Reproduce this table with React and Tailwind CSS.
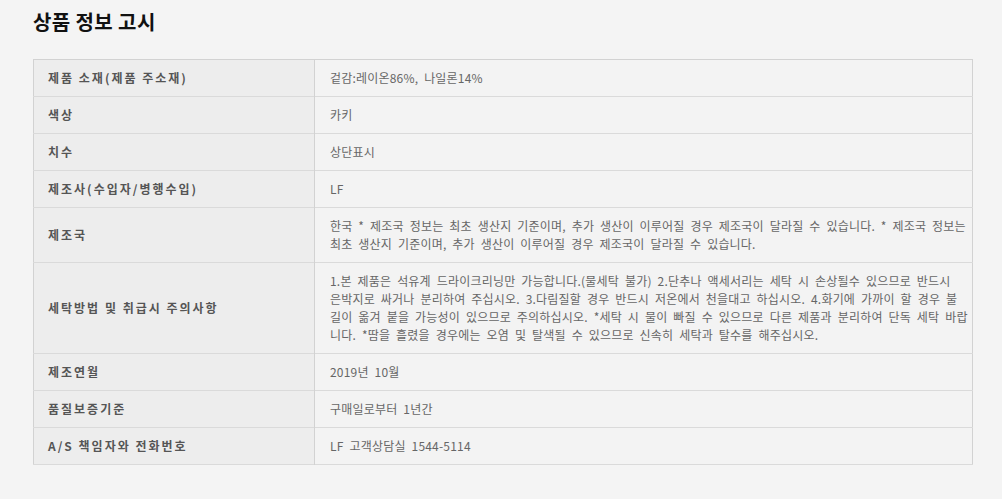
import React from "react";

const rows = [
  { label: "제품 소재(제품 주소재)", value: ["겉감:레이온86%, 나일론14%"] },
  { label: "색상", value: ["카키"] },
  { label: "치수", value: ["상단표시"] },
  { label: "제조사(수입자/병행수입)", value: ["LF"] },
  {
    label: "제조국",
    value: [
      "한국 * 제조국 정보는 최초 생산지 기준이며, 추가 생산이 이루어질 경우 제조국이 달라질 수 있습니다. * 제조국 정보는",
      "최초 생산지 기준이며, 추가 생산이 이루어질 경우 제조국이 달라질 수 있습니다.",
    ],
  },
  {
    label: "세탁방법 및 취급시 주의사항",
    value: [
      "1.본 제품은 석유계 드라이크리닝만 가능합니다.(물세탁 불가) 2.단추나 액세서리는 세탁 시 손상될수 있으므로 반드시",
      "은박지로 싸거나 분리하여 주십시오. 3.다림질할 경우 반드시 저온에서 천을대고 하십시오. 4.화기에 가까이 할 경우 불",
      "길이 옮겨 붙을 가능성이 있으므로 주의하십시오. *세탁 시 물이 빠질 수 있으므로 다른 제품과 분리하여 단독 세탁 바랍",
      "니다. *땀을 흘렸을 경우에는 오염 및 탈색될 수 있으므로 신속히 세탁과 탈수를 해주십시오.",
    ],
  },
  { label: "제조연월", value: ["2019년 10월"] },
  { label: "품질보증기준", value: ["구매일로부터 1년간"] },
  { label: "A/S 책임자와 전화번호", value: ["LF 고객상담실 1544-5114"] },
];

function App() {
  return (
    <div
      className="w-[1002px] h-[499px] bg-[#f4f4f4] pl-[33px] pt-[9px] overflow-hidden"
      style={{ fontFamily: '"Noto Sans CJK KR", "Noto Sans", sans-serif' }}
    >
      <h2 className="text-[20px] leading-[26px] font-bold text-[#111] tracking-[0.4px]">상품 정보 고시</h2>

      {/* 고시 테이블 */}
      <table className="mt-[24px] w-[940px] border-collapse border border-[#d2d2d2] text-[12px] leading-[18px]">
        <tbody>
          {rows.map((row, i) => (
            <tr key={i} className="border-b border-[#dadada]">
              <th className="w-[281px] bg-[#ededed] border-r border-[#d2d2d2] py-[9px] pl-[14px] text-left align-middle font-bold text-[#555] tracking-[2px]">
                {row.label}
              </th>
              <td className="bg-[#f3f3f3] py-[9px] pl-[15px] pr-0 text-[#666] align-middle tracking-[0.2px] [word-spacing:3px]">
                {row.value.map((line, j) => (
                  <div key={j} className="whitespace-nowrap">
                    {line}
                  </div>
                ))}
              </td>
            </tr>
          ))}
        </tbody>
      </table>
    </div>
  );
}

export default App;
